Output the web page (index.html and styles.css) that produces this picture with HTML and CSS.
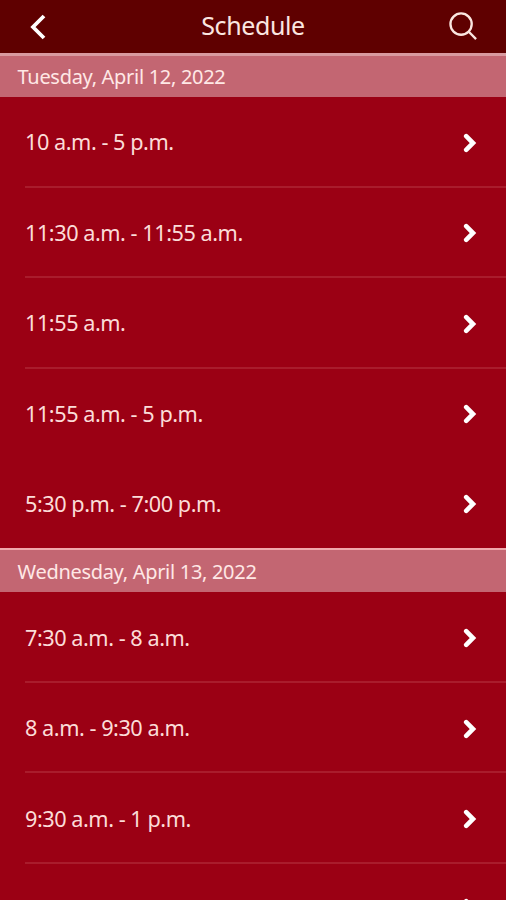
FILE: index.html
```
<!DOCTYPE html>
<html lang="en">
  <head>
    <meta charset="UTF-8" />
    <meta name="viewport" content="width=device-width, initial-scale=1.0" />
    <title>Schedule</title>
    <link rel="stylesheet" href="styles.css">
  </head>
  <body>
    <svg class="symbols" aria-hidden="true">
      <symbol id="chevron" viewBox="0 0 14 20">
        <path d="M3.2 3.2 L10 10 L3.2 16.8" />
      </symbol>
    </svg>

    <div class="screen">
      <header class="top-bar">
        <svg class="icon-back" viewBox="0 0 16 26">
          <path d="M14 2 L3 13 L14 24" />
        </svg>
        <h1>Schedule</h1>
        <svg class="icon-search" viewBox="0 0 30 30">
          <circle cx="12.5" cy="12.5" r="11" />
          <path d="M20.2 20.2 L28 28" />
        </svg>
      </header>

      <h2 class="day">Tuesday, April 12, 2022</h2>
      <ul class="slots">
        <li class="slot"><span>10 a.m. - 5 p.m.</span><svg class="icon-next"><use href="#chevron" /></svg></li>
        <li class="slot"><span>11:30 a.m. - 11:55 a.m.</span><svg class="icon-next"><use href="#chevron" /></svg></li>
        <li class="slot"><span>11:55 a.m.</span><svg class="icon-next"><use href="#chevron" /></svg></li>
        <li class="slot no-line"><span>11:55 a.m. - 5 p.m.</span><svg class="icon-next"><use href="#chevron" /></svg></li>
        <li class="slot last"><span>5:30 p.m. - 7:00 p.m.</span><svg class="icon-next"><use href="#chevron" /></svg></li>
      </ul>

      <h2 class="day second">Wednesday, April 13, 2022</h2>
      <ul class="slots">
        <li class="slot"><span>7:30 a.m. - 8 a.m.</span><svg class="icon-next"><use href="#chevron" /></svg></li>
        <li class="slot"><span>8 a.m. - 9:30 a.m.</span><svg class="icon-next"><use href="#chevron" /></svg></li>
        <li class="slot"><span>9:30 a.m. - 1 p.m.</span><svg class="icon-next"><use href="#chevron" /></svg></li>
        <li class="slot cut-off"><svg class="icon-next"><use href="#chevron" /></svg></li>
      </ul>
    </div>
  </body>
</html>
```

FILE: styles.css
```
* {
  box-sizing: border-box;
  margin: 0;
  padding: 0;
}

body {
  font-family: "Noto Sans", sans-serif;
  background-color: #9b0014;
  color: #fbdcd8;
}

.symbols {
  display: none;
}

.screen {
  height: 900px;
  overflow: hidden;
}

svg {
  fill: none;
  stroke: #ffffff;
}

.top-bar {
  height: 53px;
  padding: 0 28px 0 30px;
  display: flex;
  justify-content: space-between;
  align-items: center;
  background-color: #5f0000;
}

.top-bar h1 {
  height: 53px;
  font-size: 25px;
  font-weight: 400;
  letter-spacing: -0.4px;
  line-height: 51px;
  color: #fbe6e0;
}

.icon-back {
  width: 16px;
  height: 26px;
  margin-right: 11px;
  stroke-width: 3.8;
}

.icon-search {
  width: 29px;
  height: 29px;
  stroke: #fbe6e0;
  stroke-width: 2.4;
}

.day {
  height: 44px;
  padding-left: 17.5px;
  border-top: 3px solid #d99aa0;
  background-color: #c36672;
  color: #ffe8e6;
  font-size: 20px;
  font-weight: 400;
  letter-spacing: -0.3px;
  line-height: 41px;
}

.day.second {
  height: 44.4px;
  border-top: 2px solid #f0a8ac;
  line-height: 43px;
}

.slots {
  list-style: none;
}

.slot {
  height: 90.5px;
  margin-left: 25px;
  padding: 3px 29px 0 0;
  border-bottom: 2px solid #a91c2c;
  display: flex;
  justify-content: space-between;
  align-items: center;
  font-size: 21.7px;
  letter-spacing: -0.47px;
}

.slot span {
  padding-bottom: 2px;
}

.slot.no-line {
  border-bottom-color: transparent;
}

.slot.last {
  height: 89px;
  padding-top: 1px;
  border-bottom: 0;
}

.slot.cut-off {
  padding-top: 0;
}

.icon-next {
  width: 14px;
  height: 20px;
  margin-left: auto;
  stroke-width: 4.6;
  stroke-linecap: round;
}
```
